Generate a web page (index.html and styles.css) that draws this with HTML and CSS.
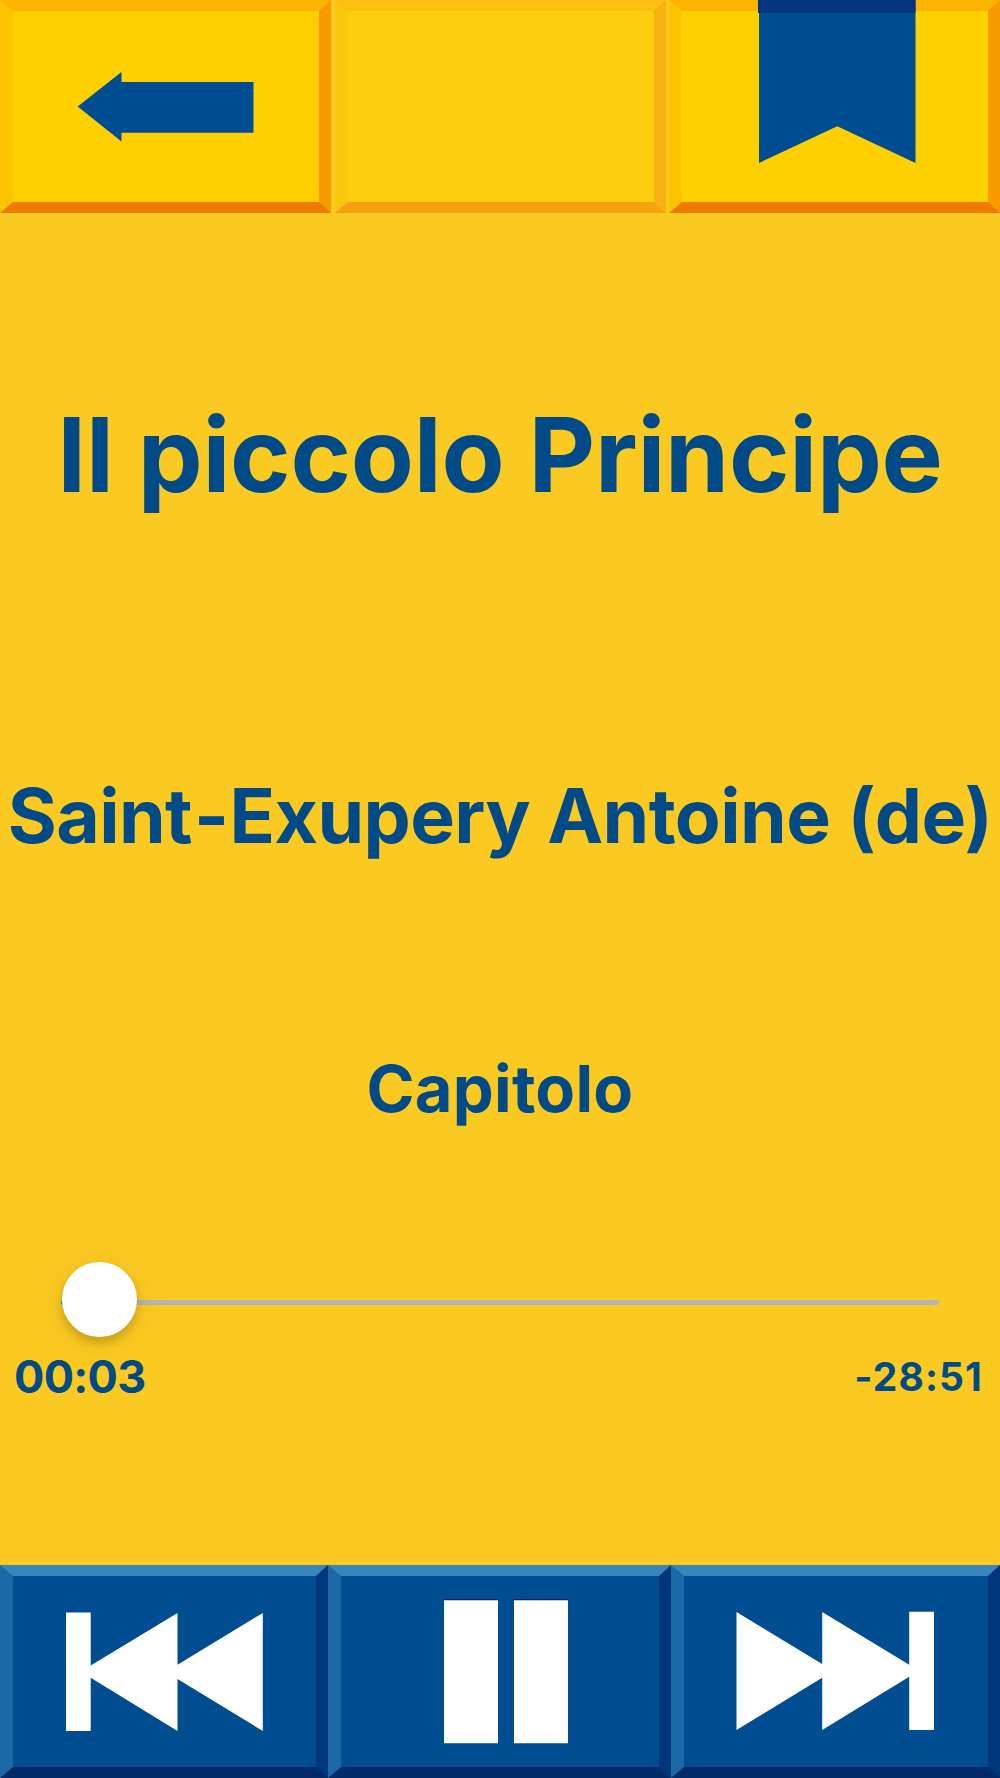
FILE: index.html
```html
<!DOCTYPE html>
<html lang="it">
<head>
    <meta charset="UTF-8">
    <meta name="viewport" content="width=device-width, initial-scale=1.0">
    <title>Il piccolo Principe</title>
    <link rel="stylesheet" href="styles.css">
</head>
<body>
    <header class="top-bar">
        <button class="key yellow" aria-label="Indietro">
            <svg viewBox="13 11 306 191">
                <polygon class="blue" points="77.7,106.6 121.5,72 121.5,82 253.5,82 253.5,132.7 121.5,132.7 121.5,141.5"/>
            </svg>
        </button>
        <button class="key yellow" disabled></button>
        <button class="key yellow" aria-label="Segnalibro">
            <svg class="bookmark" viewBox="0 0 158 163">
                <polygon class="blue" points="1,0 157.5,0 157.5,163 79.3,126.3 1,163"/>
                <rect class="fold" width="157.5" height="13"/>
            </svg>
        </button>
    </header>

    <main>
        <h1 class="title">Il piccolo Principe</h1>
        <h2 class="author">Saint<span class="hyphen">-</span>Exupery Antoine (de)</h2>
        <h3 class="chapter">Capitolo</h3>
        <div class="slider">
            <div class="track"><div class="played"></div></div>
            <div class="thumb"></div>
        </div>
        <div class="times">
            <span class="elapsed">00:03</span>
            <span class="remaining">-28:51</span>
        </div>
    </main>

    <footer class="controls">
        <button class="key dark" aria-label="Precedente">
            <svg viewBox="13 11 303 191">
                <path d="M66 47.5H90.7V100.5L177.5 48V99.7L262.8 48V166L177.5 114V166L90.7 112.8V166H66Z"/>
            </svg>
        </button>
        <button class="key dark" aria-label="Pausa">
            <svg viewBox="341 11 318 191">
                <path class="edge" d="M444 34h54v2h-54zM514 34h54v2h-54z"/>
                <path d="M444 35.3h54v143h-54zM514 35.3h54v143h-54z"/>
            </svg>
        </button>
        <button class="key dark" aria-label="Successivo">
            <svg viewBox="684 11 304 191">
                <path d="M934 46.7H909.2V99.7L822.2 47V99L736.5 47V165L822.2 112.8V165L909.2 111.8V165H934Z"/>
            </svg>
        </button>
    </footer>
</body>
</html>
```
FILE: styles.css
```css
* {
    box-sizing: border-box;
}
body {
    display: flex;
    flex-direction: column;
    height: 1778px;
    margin: 0;
    overflow: hidden;
    background-color: #fbca22;
    color: #004b87;
    font-family: Inter, "Liberation Sans", sans-serif;
}
.top-bar {
    display: grid;
    grid-template-columns: repeat(3, 1fr);
    gap: 3.5px;
    height: 213px;
}
.key {
    position: relative;
    margin: 0;
    padding: 0;
    border-style: solid;
    border-width: 11px 12px 11px 13px;
}
.key svg {
    display: block;
    width: 100%;
    height: 100%;
}
.yellow {
    background-color: #ffd000;
    border-color: #fdb400 #f59a00 #f07a00 #fcc300;
}
.yellow:disabled {
    opacity: 0.5;
}
.blue {
    fill: #004d92;
}
/* the ribbon hangs over the bevel of its key */
.key .bookmark {
    position: absolute;
    top: -11px;
    left: 76px;
    width: 158px;
    height: 163px;
}
.fold {
    fill: #043680;
}
main {
    flex: 1;
}
.title,
.author,
.chapter {
    margin: 0;
    font-weight: 700;
    text-align: center;
    white-space: nowrap;
}
.title {
    font-size: 103px;
    letter-spacing: -0.25px;
    line-height: 483px;
}
.author {
    font-size: 75px;
    letter-spacing: -0.58px;
    line-height: 239px;
}
.hyphen {
    padding: 0 1px 0 2px;
}
.chapter {
    font-size: 65px;
    letter-spacing: 0.25px;
    line-height: 308px;
}
.slider {
    position: relative;
    height: 97px;
    padding: 57px 61px 0;
}
.track {
    height: 5px;
    border-radius: 3px;
    background-color: #b5b5b5;
    overflow: hidden;
}
.played {
    width: 38px;
    height: 100%;
    background-color: #3f86e0;
}
.thumb {
    position: absolute;
    top: 19px;
    left: 62px;
    width: 74.5px;
    height: 74.5px;
    border-radius: 50%;
    background-color: #fff;
    box-shadow: 0 6px 8px rgba(0, 0, 0, 0.16), 0 4px 32px rgba(0, 0, 0, 0.1);
}
.times {
    display: flex;
    justify-content: space-between;
    padding: 0 17px 0 14px;
    font-weight: 700;
    line-height: 73px;
}
.elapsed {
    font-size: 45px;
    letter-spacing: -0.7px;
}
.remaining {
    font-size: 39px;
    letter-spacing: 1.1px;
}
.controls {
    display: grid;
    grid-template-columns: 328px 343px 329px;
    height: 213px;
}
.dark {
    background-color: #004d92;
    border-color: #3984ba #00377a #002a68 #1d68a7;
}
.dark svg {
    fill: #fff;
}
.dark .edge {
    fill: #001a80;
}
```
